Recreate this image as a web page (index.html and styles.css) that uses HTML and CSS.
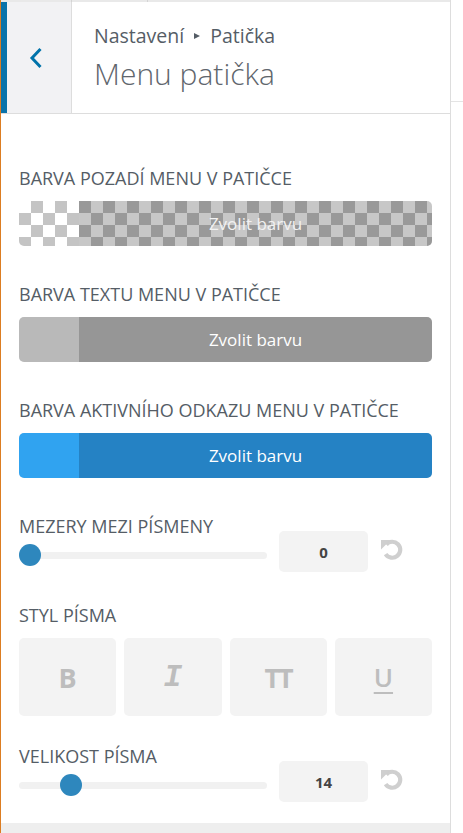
FILE: index.html
```html
<!DOCTYPE html>
<html lang="cs">
<head>
<meta charset="utf-8">
<title>Menu patička</title>
<link rel="stylesheet" href="styles.css">
</head>
<body>
<div class="page">
  <div class="panel">
    <div class="topstrip"><span class="ts-a"></span><span class="ts-b"></span></div>
    <header class="head">
      <button class="back" aria-label="Zpět">
        <svg width="14" height="22" viewBox="0 0 14 22"><polyline points="11.5,2 3,11 11.5,20" fill="none" stroke="#0073aa" stroke-width="3"/></svg>
      </button>
      <div class="titles">
        <div class="crumb">Nastavení <span class="tri"></span> Patička</div>
        <h1 class="title">Menu patička</h1>
      </div>
    </header>

    <div class="content">
      <section class="ctl ctl-color">
        <div class="label">Barva pozadí menu v patičce</div>
        <button class="picker picker-alpha"><span class="swatch"></span><span class="pick-text">Zvolit barvu</span></button>
      </section>

      <section class="ctl ctl-color">
        <div class="label">Barva textu menu v patičce</div>
        <button class="picker picker-gray"><span class="swatch"></span><span class="pick-text">Zvolit barvu</span></button>
      </section>

      <section class="ctl ctl-color">
        <div class="label">Barva aktivního odkazu menu v patičce</div>
        <button class="picker picker-blue"><span class="swatch"></span><span class="pick-text">Zvolit barvu</span></button>
      </section>

      <section class="ctl ctl-slider">
        <div class="slider-col">
          <div class="label">Mezery mezi písmeny</div>
          <div class="slider"><span class="track"></span><span class="thumb" style="left: 0px"></span></div>
        </div>
        <div class="num">0</div>
        <svg class="reset" width="24" height="24" viewBox="0 0 24 24"><path d="M6.2 7.5 A8 8 0 1 1 5.6 17.2" fill="none" stroke="#cfcfcf" stroke-width="4.2"/><polygon points="1,3 10.5,3 1,12.5" fill="#cfcfcf"/></svg>
      </section>

      <section class="ctl ctl-style">
        <div class="label">Styl písma</div>
        <div class="styles">
          <button class="sbtn sb-b">B</button>
          <button class="sbtn sb-i">I</button>
          <button class="sbtn sb-tt">TT</button>
          <button class="sbtn sb-u">U</button>
        </div>
      </section>

      <section class="ctl ctl-slider ctl-size">
        <div class="slider-col">
          <div class="label">Velikost písma</div>
          <div class="slider"><span class="track"></span><span class="thumb" style="left: 41px"></span></div>
        </div>
        <div class="num">14</div>
        <svg class="reset" width="24" height="24" viewBox="0 0 24 24"><path d="M6.2 7.5 A8 8 0 1 1 5.6 17.2" fill="none" stroke="#cfcfcf" stroke-width="4.2"/><polygon points="1,3 10.5,3 1,12.5" fill="#cfcfcf"/></svg>
      </section>
    </div>
    <div class="footer"></div>
  </div>
  <div class="side"></div>
</div>
</body>
</html>
```

FILE: styles.css
```css
* { box-sizing: border-box; }
html, body { margin: 0; padding: 0; background: #fff; }
body { font-family: "Open Sans", "Noto Sans", sans-serif; color: #555d66; }

.page { display: flex; width: 463px; height: 833px; overflow: hidden; }

.panel {
  width: 451px;
  height: 833px;
  display: flex;
  flex-direction: column;
  border-left: 1px solid #dc7d22;
  border-right: 1px solid #dddddd;
  background: #fff;
}

.side { flex: 1; height: 102px; border-bottom: 1px solid #e4e4e4; }

.topstrip { height: 2px; display: flex; background: #e9e9e9; }
.ts-a { width: 71px; border-right: 1px solid #d4d4d4; }
.ts-b { width: 76px; border-right: 1px solid #d4d4d4; }

.head {
  display: flex;
  height: 112px;
  border-bottom: 1px solid #dddddd;
}
.back {
  width: 71px;
  flex: none;
  margin: 0;
  padding: 0;
  border: 0;
  border-left: 6px solid #0a73aa;
  border-right: 1px solid #dddddd;
  background: #f2f2f4;
  display: flex;
  align-items: center;
  justify-content: center;
}
.back svg { display: block; margin-right: 7px; margin-top: 1px; }

.titles { padding: 21px 0 0 22px; }
.crumb {
  font-size: 19.5px;
  line-height: 26px;
  color: #555d66;
  display: flex;
  align-items: center;
  white-space: pre;
}
.tri {
  display: inline-block;
  width: 0; height: 0;
  border-left: 6px solid #555d66;
  border-top: 3.5px solid transparent;
  border-bottom: 3.5px solid transparent;
  margin: 0 5px 0 5px;
}
.title {
  margin: 7px 0 0;
  font-size: 30px;
  font-weight: 300;
  line-height: 36px;
  color: #5f666d;
}

.content { flex: 1; padding: 54px 18px 0; }

.label {
  font-size: 18px;
  line-height: 20px;
  text-transform: uppercase;
  color: #555d66;
  white-space: nowrap;
}

.ctl + .ctl { margin-top: 38px; }
.ctl-color .label { margin-bottom: 13px; }

.picker {
  display: flex;
  width: 100%;
  height: 45px;
  padding: 0;
  margin: 0;
  border: 0;
  border-radius: 5px;
  overflow: hidden;
  font-family: inherit;
  cursor: pointer;
}
.swatch { width: 60px; flex: none; }
.pick-text {
  flex: 1;
  display: flex;
  align-items: center;
  justify-content: center;
  font-size: 17px;
  color: #fff;
}
.picker-alpha {
  background: repeating-conic-gradient(#c4c4c4 0 25%, #ffffff 0 50%) 0 0 / 24px 24px;
}
.picker-alpha .pick-text { background: rgba(0, 0, 0, 0.22); color: #f2f2f2; }
.picker-gray .swatch { background: #b9b9b9; }
.picker-gray .pick-text { background: #969696; }
.picker-blue .swatch { background: #30a3f0; }
.picker-blue .pick-text { background: #2582c4; }

.ctl-slider { display: flex; align-items: flex-end; }
.slider-col { width: 248px; flex: none; margin-bottom: 6px; }
.slider-col .label { margin-bottom: 8px; }
.slider { position: relative; height: 22px; }
.track {
  position: absolute;
  left: 0; right: 0; top: 8px;
  height: 7px;
  border-radius: 4px;
  background: #f1f1f1;
}
.thumb {
  position: absolute;
  top: 0;
  width: 22px; height: 22px;
  border-radius: 50%;
  background: #2e87bd;
}
.num {
  width: 89px;
  height: 41px;
  margin-left: 12px;
  border-radius: 5px;
  background: #f3f3f3;
  display: flex;
  align-items: center;
  justify-content: center;
  font-size: 15px;
  font-weight: 700;
  color: #444;
}
.reset { flex: none; margin: 0 0 11px 12px; display: block; }

.ctl-style { margin-top: 33px !important; }
.ctl-style .label { margin-bottom: 13px; }
.styles { display: grid; grid-template-columns: repeat(4, 1fr); gap: 8px; }
.sbtn {
  height: 78px;
  margin: 0;
  padding: 0;
  border: 0;
  border-radius: 5px;
  background: #f3f3f3;
  color: #bdbdbd;
  display: flex;
  align-items: center;
  justify-content: center;
  cursor: pointer;
}
.sb-b { font-family: "Open Sans", sans-serif; font-weight: 700; font-size: 27px; }
.sb-i { font-family: "Liberation Mono", monospace; font-weight: 700; font-style: italic; font-size: 31px; }
.sb-tt { font-family: "Open Sans", sans-serif; font-weight: 700; font-size: 27px; letter-spacing: -2px; }
.sb-u { font-family: "Open Sans", sans-serif; font-weight: 600; font-size: 26px; text-decoration: underline; text-decoration-thickness: 2px; text-underline-offset: 5px; }

.ctl-size { margin-top: 30px !important; }

.footer { height: 10px; flex: none; background: #eeeeee; }
```
